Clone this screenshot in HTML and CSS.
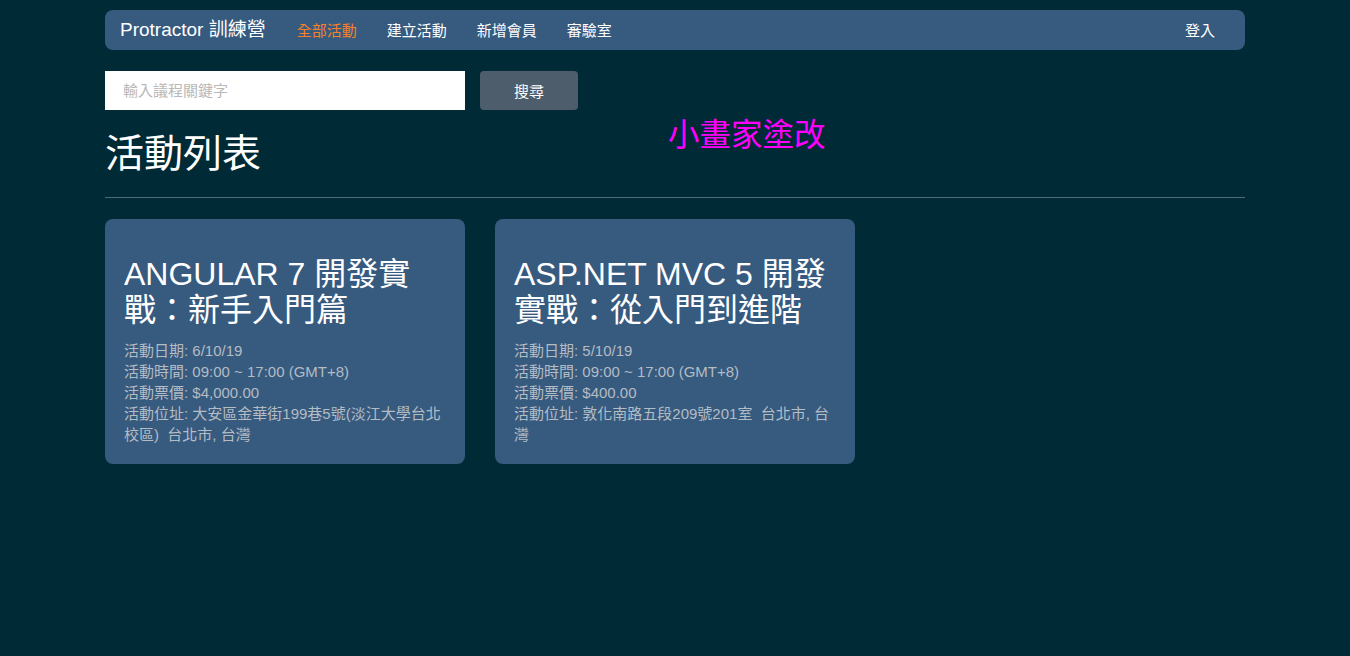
FILE: index.html
```html
<!DOCTYPE html>
<html lang="zh-Hant">
<head>
<meta charset="utf-8">
<title>Protractor 訓練營</title>
<link rel="stylesheet" href="styles.css">
</head>
<body>
<div class="container">
  <nav class="navbar">
    <a class="brand" href="#">Protractor 訓練營</a>
    <ul class="nav">
      <li><a class="active" href="#">全部活動</a></li>
      <li><a href="#">建立活動</a></li>
      <li><a href="#">新增會員</a></li>
      <li><a href="#">審驗室</a></li>
    </ul>
    <ul class="nav nav-right">
      <li><a href="#">登入</a></li>
    </ul>
  </nav>

  <form class="search">
    <input class="search-input" type="text" placeholder="輸入議程關鍵字">
    <button class="search-btn" type="button">搜尋</button>
  </form>

  <div class="page-head">
    <h1 class="title">活動列表</h1>
    <span class="scribble">小畫家塗改</span>
  </div>
  <hr class="rule">

  <div class="cards">
    <div class="card">
      <h2 class="card-title">ANGULAR 7 開發實戰：新手入門篇</h2>
      <div class="card-info">
        <div>活動日期: 6/10/19</div>
        <div>活動時間: 09:00 ~ 17:00 (GMT+8)</div>
        <div>活動票價: $4,000.00</div>
        <div>活動位址: 大安區金華街199巷5號(淡江大學台北校區)&nbsp; 台北市, 台灣</div>
      </div>
    </div>
    <div class="card">
      <h2 class="card-title">ASP.NET MVC 5 開發實戰：從入門到進階</h2>
      <div class="card-info">
        <div>活動日期: 5/10/19</div>
        <div>活動時間: 09:00 ~ 17:00 (GMT+8)</div>
        <div>活動票價: $400.00</div>
        <div>活動位址: 敦化南路五段209號201室&nbsp; 台北市, 台灣</div>
      </div>
    </div>
  </div>
</div>
</body>
</html>
```

FILE: styles.css
```css
* { box-sizing: border-box; }
html, body { margin: 0; padding: 0; }
body {
  background: #012a37;
  color: #ffffff;
  font-family: "Liberation Sans", Arial, "Noto Sans CJK TC", sans-serif;
  font-size: 15px;
  line-height: 1.4;
}
.container {
  width: 1140px;
  margin: 0 auto;
  padding-top: 10px;
}
.navbar {
  display: flex;
  align-items: center;
  height: 40px;
  background: #375a7f;
  border-radius: 8px;
  padding: 0 15px;
}
.brand {
  color: #ffffff;
  text-decoration: none;
  font-size: 19px;
  margin-right: 16px;
}
.nav {
  display: flex;
  list-style: none;
  margin: 0;
  padding: 0;
}
.nav a {
  display: block;
  padding: 0 15px;
  color: #ffffff;
  text-decoration: none;
  font-size: 15px;
}
.nav a.active { color: #f68129; }
.nav-right { margin-left: auto; }

.search {
  display: flex;
  gap: 15px;
  margin-top: 21px;
}
.search-input {
  width: 360px;
  height: 39px;
  border: 0;
  border-radius: 0;
  padding: 0 18px;
  font-family: inherit;
  font-size: 15px;
  color: #333;
  background: #fff;
  outline: none;
}
.search-input::placeholder { color: #b8b8b8; }
.search-btn {
  width: 98px;
  height: 39px;
  border: 0;
  border-radius: 4px;
  background: #4e5d6c;
  color: #ffffff;
  font-family: inherit;
  font-size: 15px;
}

.page-head {
  position: relative;
  height: 76px;
}
.title {
  margin: 0;
  padding-top: 21px;
  font-family: "Liberation Serif", "Noto Sans CJK TC", serif;
  font-weight: 400;
  font-size: 39px;
  line-height: 46px;
}
.scribble {
  position: absolute;
  left: 563px;
  top: 5px;
  color: #ff00ff;
  font-size: 31.5px;
  line-height: 40px;
}
.rule {
  border: 0;
  border-top: 1px solid #4c6b77;
  margin: 11px 0 21px;
}

.cards {
  display: flex;
  gap: 30px;
}
.card {
  width: 360px;
  background: #375a7f;
  border-radius: 8px;
  padding: 37px 19px 19px;
}
.card-title {
  margin: 0 0 12px;
  font-weight: 400;
  font-size: 32px;
  line-height: 36px;
  color: #ffffff;
}
.card-info {
  color: #b4bcc4;
  font-size: 15px;
  line-height: 21px;
}
```
